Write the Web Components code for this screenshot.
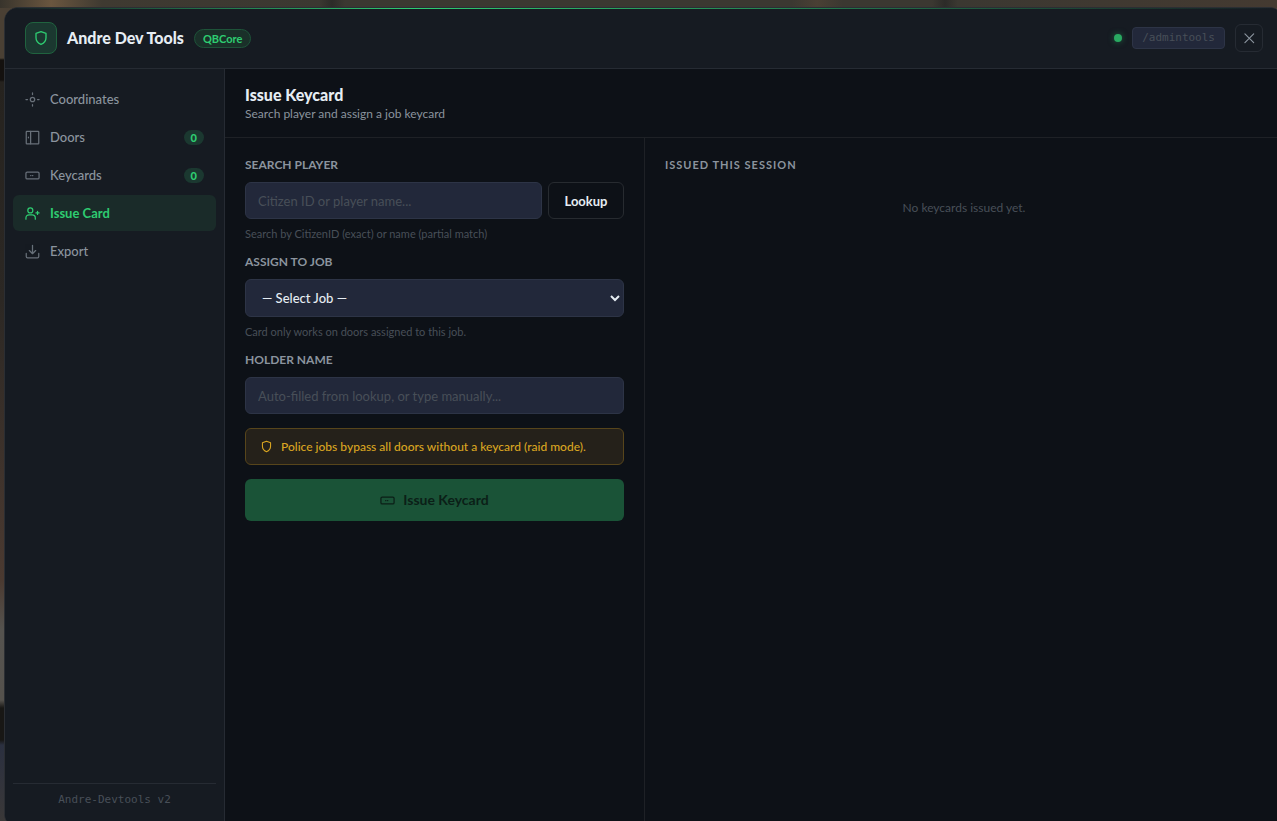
<!DOCTYPE html>
<html lang="en">
<head>
<meta charset="utf-8">
<title>Andre Dev Tools</title>
<style>
	html, body {
		height: 100%;
		margin: 0;
	}
	body {
		--green: #2ecc71;
		--panel: #161b22;
		--deep: #0d1117;
		--field: #22283a;
		--line: #262b33;
		--text: #e6edf3;
		--muted: #8b949e;
		--faint: #484f58;
		--mono: "DejaVu Sans Mono", monospace;
		font-family: Lato, sans-serif;
		color: var(--text);
		background:
			linear-gradient(90deg, #38342c, #6a563f 4%, #3f3a31 8%, #3b3831 25%, #2c2b28 26%, #3b3831 27%, #3b3831 62%, #4a4034 64%, #3b3831 66%, #3b3831 73%, #2c2b28 74%, #3b3831 75%, #443a31) top / 100% 8px no-repeat,
			linear-gradient(#4a4034, #4a4034 58px, #14110f 60px, #14110f 80px, #26231f 82px, #2c2824 300px, #4b3a31 580px, #55534f 630px, #55524d 700px, #181715 708px, #181715 740px, #2b3040 745px, #3a3838);
	}
	dev-tools {
		height: 100%;
	}
</style>
</head>
<body>
<dev-tools></dev-tools>

<script>
const ICONS = {
	shield: `<path d="M12 2.500 4.500 5.200v6.300c0 4.800 3 8.200 7.500 10.200 4.500-2 7.500-5.400 7.500-10.200V5.200z"/>`,
	coords: `<circle cx="12" cy="12" r="3.500"/><path d="M12 1.500V4M12 20v2.500M1.500 12H4M20 12h2.500"/>`,
	door: `<rect x="2" y="2" width="20" height="20" rx="1"/><path d="M9 2v20M5.500 11.500v1"/>`,
	card: `<rect x="1.500" y="6.500" width="21" height="11" rx="2"/><path d="M9 12h.5M12 12h.5"/>`,
	user: `<circle cx="8.500" cy="7" r="4"/><path d="M1.500 21v-2a5 5 0 0 1 5-5h5a5 5 0 0 1 5 5v2M20 8.500v5M17.500 11h5"/>`,
	download: `<path d="M2 15v5a2 2 0 0 0 2 2h16a2 2 0 0 0 2-2v-5M7 10.500l5 5 5-5M12 15V2"/>`,
	close: `<path d="M5 5l15 15M20 5 5 20"/>`
};

class DevIcon
extends HTMLElement
{
	constructor ()
	{
		super();
		this.attachShadow({mode:"open"});
	}

	connectedCallback ()
	{
		this.shadowRoot.innerHTML = `
			<style>
				:host {
					display: block;
					flex: none;
					width: var(--icon-size, 15px);
					height: var(--icon-size, 15px);
				}
				svg {
					display: block;
					width: 100%;
					height: 100%;
					fill: none;
					stroke: currentColor;
					stroke-width: 2;
					stroke-linecap: round;
					stroke-linejoin: round;
				}
			</style>
			<svg viewBox="0 0 24 24" aria-hidden="true">${ICONS[this.getAttribute("name")]}</svg>
		`;
	}
}
customElements.define("dev-icon", DevIcon);

class ToolHeader
extends HTMLElement
{
	constructor ()
	{
		super();
		this.attachShadow({mode:"open"});
		this.shadowRoot.innerHTML = `
			<style>
				:host {
					display: flex;
					align-items: center;
					gap: 10px;
					height: 60px;
					padding: 0 20px;
					background: var(--panel);
					border-bottom: 1px solid var(--line);
				}
				.logo {
					display: grid;
					place-items: center;
					box-sizing: border-box;
					width: 32px;
					height: 32px;
					color: var(--green);
					background: #1b3830;
					border: 1px solid #20633f;
					border-radius: 8px;
					--icon-size: 16px;
				}
				h1 {
					margin: 0;
					font-size: 16px;
					line-height: 20px;
					font-weight: 900;
				}
				.tag {
					padding: 0 8px;
					font-size: 11px;
					line-height: 17px;
					font-weight: 700;
					color: var(--green);
					background: #1a3029;
					border: 1px solid #1e5339;
					border-radius: 10px;
				}
				.status {
					width: 8px;
					height: 8px;
					margin-left: auto;
					border-radius: 50%;
					background: #29a961;
					box-shadow: 0 0 6px #29a96180;
				}
				code {
					padding: 0 9px;
					font: 11px/20px var(--mono);
					color: var(--faint);
					background: var(--field);
					border: 1px solid #2d3446;
					border-radius: 4px;
				}
				button {
					display: grid;
					place-items: center;
					width: 28px;
					height: 28px;
					padding: 0;
					color: var(--muted);
					background: none;
					border: 1px solid var(--line);
					border-radius: 6px;
					--icon-size: 14px;
				}
			</style>
			<div class="logo"><dev-icon name="shield"></dev-icon></div>
			<h1>Andre Dev Tools</h1>
			<span class="tag">QBCore</span>
			<span class="status"></span>
			<code>/admintools</code>
			<button type="button" aria-label="Close"><dev-icon name="close"></dev-icon></button>
		`;
	}
}
customElements.define("tool-header", ToolHeader);

class NavItem
extends HTMLElement
{
	constructor ()
	{
		super();
		this.attachShadow({mode:"open"});
	}

	connectedCallback ()
	{
		const count = this.getAttribute("count");
		this.shadowRoot.innerHTML = `
			<style>
				:host {
					display: block;
				}
				button {
					display: flex;
					align-items: center;
					gap: 10px;
					width: 100%;
					height: 36px;
					padding: 0 12px;
					font: 500 13px/18px Lato, sans-serif;
					color: var(--muted);
					background: none;
					border: 0;
					border-radius: 6px;
				}
				dev-icon {
					opacity: 0.7;
				}
				:host([active]) button {
					font-weight: 700;
					color: var(--green);
					background: #1a2b29;
				}
				:host([active]) dev-icon {
					opacity: 1;
				}
				.count {
					margin-left: auto;
					padding: 0 7px;
					font-size: 11px;
					line-height: 15px;
					font-weight: 900;
					color: var(--green);
					background: #1b3830;
					border-radius: 10px;
				}
			</style>
			<button type="button">
				<dev-icon name="${this.getAttribute("icon")}"></dev-icon>
				<slot></slot>
				${count === null ? "" : `<span class="count">${count}</span>`}
			</button>
		`;
	}
}
customElements.define("nav-item", NavItem);

class SideBar
extends HTMLElement
{
	constructor ()
	{
		super();
		this.attachShadow({mode:"open"});
		this.shadowRoot.innerHTML = `
			<style>
				:host {
					display: flex;
					flex-direction: column;
					box-sizing: border-box;
					flex: 0 0 220px;
					padding: 12px 8px;
					background: var(--panel);
					border-right: 1px solid var(--line);
				}
				nav {
					display: grid;
					gap: 2px;
				}
				footer {
					margin-top: auto;
					padding: 8px 0;
					font: 11px/15px var(--mono);
					text-align: center;
					color: var(--faint);
					border-top: 1px solid var(--line);
				}
			</style>
			<nav>
				<nav-item icon="coords">Coordinates</nav-item>
				<nav-item icon="door" count="0">Doors</nav-item>
				<nav-item icon="card" count="0">Keycards</nav-item>
				<nav-item icon="user" active>Issue Card</nav-item>
				<nav-item icon="download">Export</nav-item>
			</nav>
			<footer>Andre-Devtools v2</footer>
		`;
	}
}
customElements.define("side-bar", SideBar);

class IssueForm
extends HTMLElement
{
	constructor ()
	{
		super();
		this.attachShadow({mode:"open"});
		this.shadowRoot.innerHTML = `
			<style>
				:host {
					display: block;
				}
				form {
					display: grid;
					gap: 14px;
				}
				.field {
					display: flex;
					flex-direction: column;
				}
				label {
					margin-bottom: 10px;
					font-size: 12px;
					line-height: 14px;
					font-weight: 700;
					text-transform: uppercase;
					color: var(--muted);
				}
				.row {
					display: flex;
					gap: 6px;
				}
				input, select, button {
					box-sizing: border-box;
					font: 13px/18px Lato, sans-serif;
					color: var(--text);
					border: 1px solid #2d3446;
					border-radius: 6px;
				}
				input {
					flex: 1;
					width: 100%;
					min-width: 0;
					min-height: 37px;
					padding: 0 12px;
					background: var(--field);
				}
				input::placeholder {
					color: var(--faint);
				}
				select {
					height: 38px;
					padding: 0 0 0 12px;
					font-weight: 500;
					background: var(--field);
				}
				p {
					margin: 8px 0 0;
					font-size: 11px;
					line-height: 14px;
					color: var(--faint);
				}
				.lookup {
					width: 76px;
					font-weight: 700;
					background: none;
					border-color: #272b30;
				}
				.notice {
					display: flex;
					align-items: center;
					gap: 8px;
					padding: 0 14px;
					font-size: 12px;
					line-height: 35px;
					font-weight: 500;
					color: #d9a521;
					background: #25211a;
					border: 1px solid #57451b;
					border-radius: 6px;
					--icon-size: 13px;
				}
				.issue {
					display: flex;
					align-items: center;
					justify-content: center;
					gap: 8px;
					height: 42px;
					font-size: 14px;
					font-weight: 700;
					color: #0b1f17;
					background: #1a5337;
					border: 0;
				}
			</style>
			<form>
				<div class="field">
					<label for="player">Search Player</label>
					<div class="row">
						<input id="player" type="text" placeholder="Citizen ID or player name...">
						<button class="lookup" type="button">Lookup</button>
					</div>
					<p>Search by CitizenID (exact) or name (partial match)</p>
				</div>
				<div class="field">
					<label for="job">Assign to Job</label>
					<select id="job"><option>— Select Job —</option></select>
					<p>Card only works on doors assigned to this job.</p>
				</div>
				<div class="field">
					<label for="holder">Holder Name</label>
					<input id="holder" type="text" placeholder="Auto-filled from lookup, or type manually...">
				</div>
				<div class="notice"><dev-icon name="shield"></dev-icon><span>Police jobs bypass all doors without a keycard (raid mode).</span></div>
				<button class="issue" type="button" disabled><dev-icon name="card"></dev-icon>Issue Keycard</button>
			</form>
		`;
	}
}
customElements.define("issue-form", IssueForm);

class IssuePage
extends HTMLElement
{
	constructor ()
	{
		super();
		this.attachShadow({mode:"open"});
		this.shadowRoot.innerHTML = `
			<style>
				:host {
					display: flex;
					flex-direction: column;
					flex: 1;
					min-width: 0;
					background: var(--deep);
				}
				header {
					padding: 16px 20px 14px;
					border-bottom: 1px solid #1e2126;
				}
				h2 {
					margin: 0;
					font-size: 16px;
					line-height: 20px;
					font-weight: 900;
				}
				header p {
					margin: 0;
					font-size: 12px;
					line-height: 18px;
					color: var(--muted);
				}
				.columns {
					display: flex;
					flex: 1;
				}
				issue-form {
					box-sizing: border-box;
					flex: 0 0 420px;
					padding: 20px;
					border-right: 1px solid #1e2126;
				}
				section {
					flex: 1;
					padding: 20px;
				}
				h3 {
					margin: 0;
					font-size: 11px;
					line-height: 14px;
					font-weight: 700;
					letter-spacing: 1px;
					text-transform: uppercase;
					color: var(--muted);
				}
				.empty {
					margin: 28px 0 0;
					font-size: 12px;
					line-height: 16px;
					text-align: center;
					color: var(--faint);
				}
			</style>
			<header>
				<h2>Issue Keycard</h2>
				<p>Search player and assign a job keycard</p>
			</header>
			<div class="columns">
				<issue-form></issue-form>
				<section>
					<h3>Issued This Session</h3>
					<p class="empty">No keycards issued yet.</p>
				</section>
			</div>
		`;
	}
}
customElements.define("issue-page", IssuePage);

class DevTools
extends HTMLElement
{
	constructor ()
	{
		super();
		this.attachShadow({mode:"open"});
		this.shadowRoot.innerHTML = `
			<style>
				:host {
					display: flex;
					box-sizing: border-box;
					padding: 7px 0 0 4px;
					overflow: hidden;
				}
				/* the window runs a little past the right and bottom edges */
				.window {
					position: relative;
					display: flex;
					flex-direction: column;
					flex: 1;
					margin: 0 -7px -7px 0;
					overflow: hidden;
					background: var(--panel);
					border: 1px solid #2b2e33;
					border-radius: 14px;
				}
				.glow {
					position: absolute;
					top: 0;
					left: 0;
					right: 0;
					height: 1px;
					background: linear-gradient(90deg, transparent, var(--green) 32%, transparent);
				}
				.body {
					display: flex;
					flex: 1;
				}
			</style>
			<div class="window">
				<tool-header></tool-header>
				<div class="body">
					<side-bar></side-bar>
					<issue-page></issue-page>
				</div>
				<div class="glow"></div>
			</div>
		`;
	}
}
customElements.define("dev-tools", DevTools);
</script>
</body>
</html>
